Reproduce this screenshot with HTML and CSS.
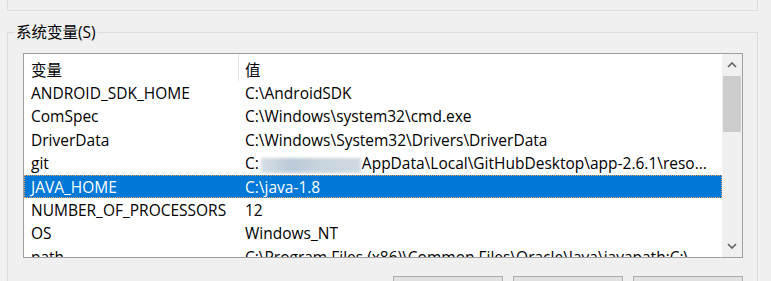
FILE: index.html
```html
<!DOCTYPE html>
<html lang="zh-CN">
<head>
  <meta charset="UTF-8" />
  <title>环境变量</title>
  <link rel="stylesheet" href="styles.css">
</head>
<body>

  <div class="prev-group"></div>

  <fieldset class="group">
    <legend>系统变量(S)</legend>

    <div class="listbox">
      <div class="rows">
        <div class="row header">
          <span class="col-name">变量</span>
          <span class="col-value">值</span>
        </div>
        <div class="row"><span class="col-name">ANDROID_SDK_HOME</span><span class="col-value">C:\AndroidSDK</span></div>
        <div class="row"><span class="col-name">ComSpec</span><span class="col-value">C:\Windows\system32\cmd.exe</span></div>
        <div class="row"><span class="col-name">DriverData</span><span class="col-value">C:\Windows\System32\Drivers\DriverData</span></div>
        <div class="row"><span class="col-name">git</span><span class="col-value">C:<span class="blur"></span>AppData\Local\GitHubDesktop\app-2.6.1\reso...</span></div>
        <div class="row selected"><span class="col-name">JAVA_HOME</span><span class="col-value">C:\java-1.8</span></div>
        <div class="row"><span class="col-name">NUMBER_OF_PROCESSORS</span><span class="col-value">12</span></div>
        <div class="row"><span class="col-name">OS</span><span class="col-value">Windows_NT</span></div>
        <div class="row"><span class="col-name">path</span><span class="col-value">C:\Program Files (x86)\Common Files\Oracle\Java\javapath;C:\...</span></div>
      </div>

      <div class="scrollbar">
        <div class="arrow">
          <svg width="10" height="6" viewBox="0 0 10 6"><path d="M1 5 L5 1 L9 5" fill="none" stroke="#606060" stroke-width="1.6"/></svg>
        </div>
        <div class="thumb"></div>
        <div class="track"></div>
        <div class="arrow">
          <svg width="10" height="6" viewBox="0 0 10 6"><path d="M1 1 L5 5 L9 1" fill="none" stroke="#606060" stroke-width="1.6"/></svg>
        </div>
      </div>
    </div>

    <div class="buttons">
      <button>新建(W)...</button>
      <button>编辑(I)...</button>
      <button>删除(L)</button>
    </div>
  </fieldset>

</body>
</html>
```

FILE: styles.css
```css
* {
  margin: 0;
  padding: 0;
  box-sizing: border-box;
}

body {
  font-family: 'Open Sans', 'Noto Sans CJK SC', sans-serif;
  font-size: 15.5px;
  background: #f0f0f0;
  color: #000;
  height: 281px;
  overflow: hidden;
}

.prev-group {
  height: 11px;
  margin: 0 13px 0 7px;
  border: 1px solid #dcdcdc;
  border-top: none;
}

.group {
  margin: 11px 13px 0 7px;
  height: 400px;
  border: 1px solid #dcdcdc;
  padding: 11px 14px 0 15px;
}

.group legend {
  margin-left: -8px;
  padding: 0 1px;
  line-height: 20px;
  color: #000;
}

.listbox {
  display: flex;
  height: 205px;
  border: 1px solid #a0a0a0;
  background: #fff;
  overflow: hidden;
}

.rows {
  flex: 1;
  overflow: hidden;
}

.row {
  display: flex;
  height: 23.4px;
  align-items: center;
  white-space: nowrap;
}

.row.header {
  height: 27.4px;
  padding-top: 3px;
}

.col-name {
  width: 214px;
  padding-left: 7px;
  flex-shrink: 0;
}

.col-value {
  padding-left: 7px;
  overflow: hidden;
}

.header .col-value {
  border-left: 1px solid #e5e5e5;
  align-self: stretch;
  display: flex;
  align-items: center;
  margin-top: -3px;
  padding-top: 3px;
  padding-left: 6px;
  height: 27px;
}

.row.selected {
  background: #0078d7;
  color: #fff;
  outline: 1px dotted #e8a060;
  outline-offset: -1px;
}

.blur {
  display: inline-block;
  width: 100px;
  height: 15px;
  vertical-align: middle;
  background: linear-gradient(to right, #d7dfe6, #bccbd8 30%, #c8d4de 60%, #d0d9e1);
  filter: blur(1.5px);
  margin: 0 1px 0 2px;
}

.scrollbar {
  width: 20px;
  display: flex;
  flex-direction: column;
  background: #f0f0f0;
}

.arrow {
  height: 22px;
  display: flex;
  align-items: center;
  justify-content: center;
}

.thumb {
  height: 56px;
  margin: 0 1px;
  background: #cdcdcd;
}

.track {
  flex: 1;
}

.buttons {
  display: flex;
  justify-content: flex-end;
  gap: 10px;
  margin-top: 18px;
}

.buttons button {
  width: 110px;
  height: 32px;
  font: inherit;
  background: #e1e1e1;
  border: 1px solid #adadad;
}
```
